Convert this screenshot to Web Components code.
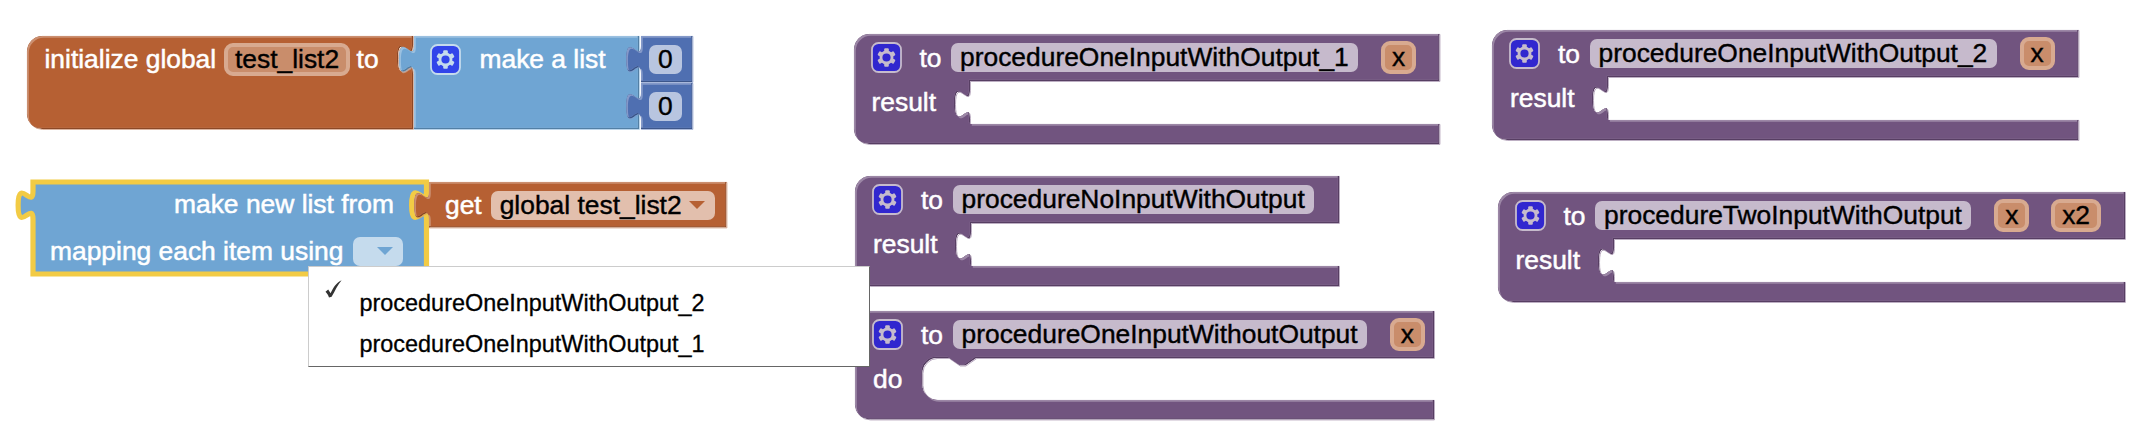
<!DOCTYPE html>
<html lang="en">
<head>
<meta charset="utf-8">
<title>Blocks workspace</title>
<style>
html,body{margin:0;height:100%;background:#fff;overflow:hidden}
body{font:26.4px/30px "Liberation Sans",Arial,sans-serif;color:#fff}
</style>
</head>
<body>
<block-workspace>
  <code-block x="27" y="36" w="386" h="93" shape="hat" hue="orange">
    <block-row style="height:46px;padding-left:17.5px">
      <block-label>initialize global</block-label>
      <name-field style="margin-left:8px">test_list2</name-field>
      <block-label style="margin-left:6.5px">to</block-label>
    </block-row>
  </code-block>
  <code-block x="414" y="36" w="225" h="93" shape="value" hue="blue">
    <block-row style="height:46px;padding-left:16px">
      <gear-button light></gear-button>
      <block-label style="margin-left:18.5px">make a list</block-label>
    </block-row>
  </code-block>
  <code-block x="640.5" y="36" w="51.5" h="46" shape="value" hue="indigo">
    <block-row style="height:46px;padding-left:8.5px"><text-field>0</text-field></block-row>
  </code-block>
  <code-block x="640.5" y="83" w="51.5" h="46" shape="value" hue="indigo">
    <block-row style="height:46px;padding-left:8.5px"><text-field>0</text-field></block-row>
  </code-block>

  <code-block x="32.5" y="181.5" w="393.5" h="92" shape="map" hue="blue" selected>
    <block-row style="height:45px;justify-content:flex-end;padding-right:32px">
      <block-label>make new list from</block-label>
    </block-row>
    <block-row style="height:49px;padding-left:17.5px">
      <block-label>mapping each item using</block-label>
      <drop-field style="margin-left:10px"></drop-field>
    </block-row>
  </code-block>
  <code-block x="428.5" y="182" w="297.5" h="45.5" shape="value" hue="orange">
    <block-row style="height:46px;padding-left:16.5px">
      <block-label>get</block-label>
      <drop-field style="margin-left:9px">global test_list2</drop-field>
    </block-row>
  </code-block>

  <procedure-block x="853.5" y="34" w="585.5" name="procedureOneInputWithOutput_1" params="x"></procedure-block>
  <procedure-block x="855" y="176" w="484" name="procedureNoInputWithOutput" params=""></procedure-block>
  <procedure-block x="855" y="311" w="579" name="procedureOneInputWithoutOutput" params="x" kind="do"></procedure-block>
  <procedure-block x="1492" y="30" w="586.5" name="procedureOneInputWithOutput_2" params="x"></procedure-block>
  <procedure-block x="1497.5" y="192" w="627" name="procedureTwoInputWithOutput" params="x x2"></procedure-block>

  <option-menu>
    <menu-option checked>procedureOneInputWithOutput_2</menu-option>
    <menu-option>procedureOneInputWithOutput_1</menu-option>
  </option-menu>
</block-workspace>

<script>
const HUES = {
  orange: {main:'#b66033', light:'#cb8f70', dark:'#8c4826'},
  blue:   {main:'#6fa5d3', light:'#9ac0e0', dark:'#527fa5'},
  indigo: {main:'#4f6fb1', light:'#8499c9', dark:'#3d568b'},
  purple: {main:'#71547f', light:'#9c87a6', dark:'#573e63'}
};

class Base extends HTMLElement {
  connectedCallback() {
    if (this.shadowRoot) return;
    this.attachShadow({mode:'open'}).innerHTML = this.template();
  }
}
const define = (name, css, html) => customElements.define(name, class extends Base {
  template() { return `<style>${css}</style>${html}`; }
});

/* Sockets and plugs, starting at the current point. */
const S = 1.86;
const n = (...v) => v.map(a => +(a * S).toFixed(2)).join(' ');
const plugDown = `c${n(0,10,-8,-8,-8,7.5)}s${n(8,-2.5,8,7.5)}`;
const plugUp = `c${n(0,-10,-8,8,-8,-7.5)}s${n(8,2.5,8,-7.5)}`;
const R = 15;
const SHAPES = {
  hat: (w,h) => `M${R} 0H${w}V9.2${plugDown}V${h}H${R}A${R} ${R} 0 0 1 0 ${h-R}V${R}A${R} ${R} 0 0 1 ${R} 0Z`,
  value: (w,h) => `M0 0H${w}V${h}H0V37.2${plugUp}Z`,
  map: (w,h) => `M0 0H${w}V9.2${plugDown}V${h}H0V37.2${plugUp}Z`,
  result: (w,h) => `M${R} 0H${w}V47H116V56.2${plugDown}V90H${w}V${h}H${R}A${R} ${R} 0 0 1 0 ${h-R}V${R}A${R} ${R} 0 0 1 ${R} 0Z`,
  do: (w,h) => `M${R} 0H${w}V47H121.5l-11 7.6h-5.6l-11 -7.6H82.5a15 15 0 0 0 -15 15v12a15 15 0 0 0 15 15H${w}V${h}H${R}A${R} ${R} 0 0 1 0 ${h-R}V${R}A${R} ${R} 0 0 1 ${R} 0Z`
};

let serial = 0;
customElements.define('code-block', class extends Base {
  template() {
    const a = k => this.getAttribute(k), w = +a('w'), h = +a('h');
    const c = HUES[a('hue')], d = SHAPES[a('shape')](w, h), id = 'b' + (++serial);
    const art = this.hasAttribute('selected')
      ? `<path d="${d}" fill="${c.main}" stroke="#f2cb45" stroke-width="5.2"/>`
      : `<defs><clipPath id="${id}"><path d="${d}"/></clipPath>
         <clipPath id="${id}i"><path d="${d}" transform="translate(-1.2 -1.2)"/></clipPath></defs>
         <path d="${d}" fill="none" stroke="${c.light}" stroke-width="1" opacity=".75" transform="translate(.4 .4)"/>
         <g clip-path="url(#${id})"><path d="${d}" fill="${c.dark}"/>
         <g clip-path="url(#${id}i)"><path d="${d}" fill="${c.light}"/>
         <path d="${d}" fill="${c.main}" transform="translate(1.8 1.8)"/></g></g>`;
    return `<style>
      :host{position:absolute;left:${a('x')}px;top:${a('y')}px;width:${w}px;height:${h}px;--block:${c.main};--edge:${c.light}}
      svg{position:absolute;left:0;top:0;overflow:visible}
      .rows{position:relative;display:flex;flex-direction:column}
    </style><svg width="${w}" height="${h}">${art}</svg><div class="rows"><slot></slot></div>`;
  }
});

customElements.define('procedure-block', class extends Base {
  template() {
    const a = k => this.getAttribute(k), isDo = a('kind') === 'do';
    const params = a('params').split(' ').filter(Boolean)
      .map((p, i) => `<name-field style="margin-left:${i ? 22 : 23}px">${p}</name-field>`).join('');
    return `<style>:host{display:contents}
      .head{height:47px;padding-left:17px}.body{height:41px;padding-left:18px}
      .to{margin-left:18px;margin-right:9.5px}</style>
      <code-block x="${a('x')}" y="${a('y')}" w="${a('w')}" h="${isDo ? 108.5 : 110}" shape="${isDo ? 'do' : 'result'}" hue="purple">
        <block-row class="head"><gear-button></gear-button><block-label class="to">to</block-label>
          <text-field>${a('name')}</text-field>${params}</block-row>
        <block-row class="body"><block-label>${isDo ? 'do' : 'result'}</block-label></block-row>
      </code-block>`;
  }
});

define('block-workspace', ':host{display:block;position:relative;width:100%;height:442px;overflow:hidden;background:#fff}', '<slot></slot>');
define('block-row', ':host{display:flex;align-items:center;box-sizing:border-box;white-space:nowrap}', '<slot></slot>');
define('block-label', ':host{display:block;height:30px;line-height:30px;color:#fff;-webkit-text-stroke:.5px #fff}', '<slot></slot>');
define('text-field', ':host{display:block;box-sizing:border-box;height:29px;line-height:29px;padding:0 9.4px 0 9px;border-radius:7px;background:rgba(255,255,255,.6);color:#000;-webkit-text-stroke:.4px #000}', '<slot></slot>');
define('name-field', ':host{display:block;box-sizing:border-box;height:33px;line-height:25px;padding:0 7px 0 6.8px;border:4px solid #d8aa90;border-radius:9px;background:#c98d6b;color:#000;-webkit-text-stroke:.4px #000}', '<slot></slot>');
define('drop-field', ':host{display:flex;align-items:center;justify-content:flex-end;box-sizing:border-box;height:29px;line-height:29px;min-width:50px;padding:0 10px 0 9px;border-radius:7px;background:rgba(255,255,255,.6);color:#000;-webkit-text-stroke:.4px #000}svg{margin-left:7px;fill:var(--block)}span{height:29px}',
  '<span><slot></slot></span><svg width="16" height="8"><path d="M0 0H16L8 8Z"/></svg>');

customElements.define('gear-button', class extends Base {
  template() {
    const light = this.hasAttribute('light');
    const fg = light ? '#c5dbed' : '#c6bbcc', bg = light ? '#3245ea' : '#3127cf';
    let teeth = '';
    for (let i = 0; i < 6; i++) teeth += `<rect x="-2.3" y="-9.2" width="4.6" height="6" rx="1" transform="rotate(${i * 60})"/>`;
    return `<style>:host{display:block;width:31px;height:31px;flex:none}svg{display:block}</style>
      <svg width="31" height="31"><rect x="1" y="1" width="29" height="29" rx="6.5" fill="${bg}" stroke="${fg}" stroke-width="1.8"/>
      <g transform="translate(15.5 15.5)" fill="${fg}">${teeth}<circle r="5.5" fill="${bg}" stroke="${fg}" stroke-width="2.8"/></g></svg>`;
  }
});

define('option-menu', ':host{position:absolute;left:308px;top:266px;width:562px;height:101px;box-sizing:border-box;background:#fff;border:1px solid;border-color:#ccc #666 #666 #ccc;color:#000;padding-top:16px;display:flex;flex-direction:column;font-size:23.43px;line-height:41px}', '<slot></slot>');
define('menu-option', ':host{display:flex;height:41px;padding-left:50.5px;position:relative;-webkit-text-stroke:.3px #000}svg{display:none;position:absolute;left:15px;top:-4px}:host([checked]) svg{display:block}',
  '<svg width="20" height="20"><path d="M1.5 12.8L4.2 10.6L6.6 14.2C9.2 8.6 12.4 3.6 17.6 1.2C13.6 6 11 11.8 7.6 17.8L5 18.4C4.2 16.4 3 14.2 1.5 12.8Z" fill="#333"/></svg><slot></slot>');
</script>
</body>
</html>
